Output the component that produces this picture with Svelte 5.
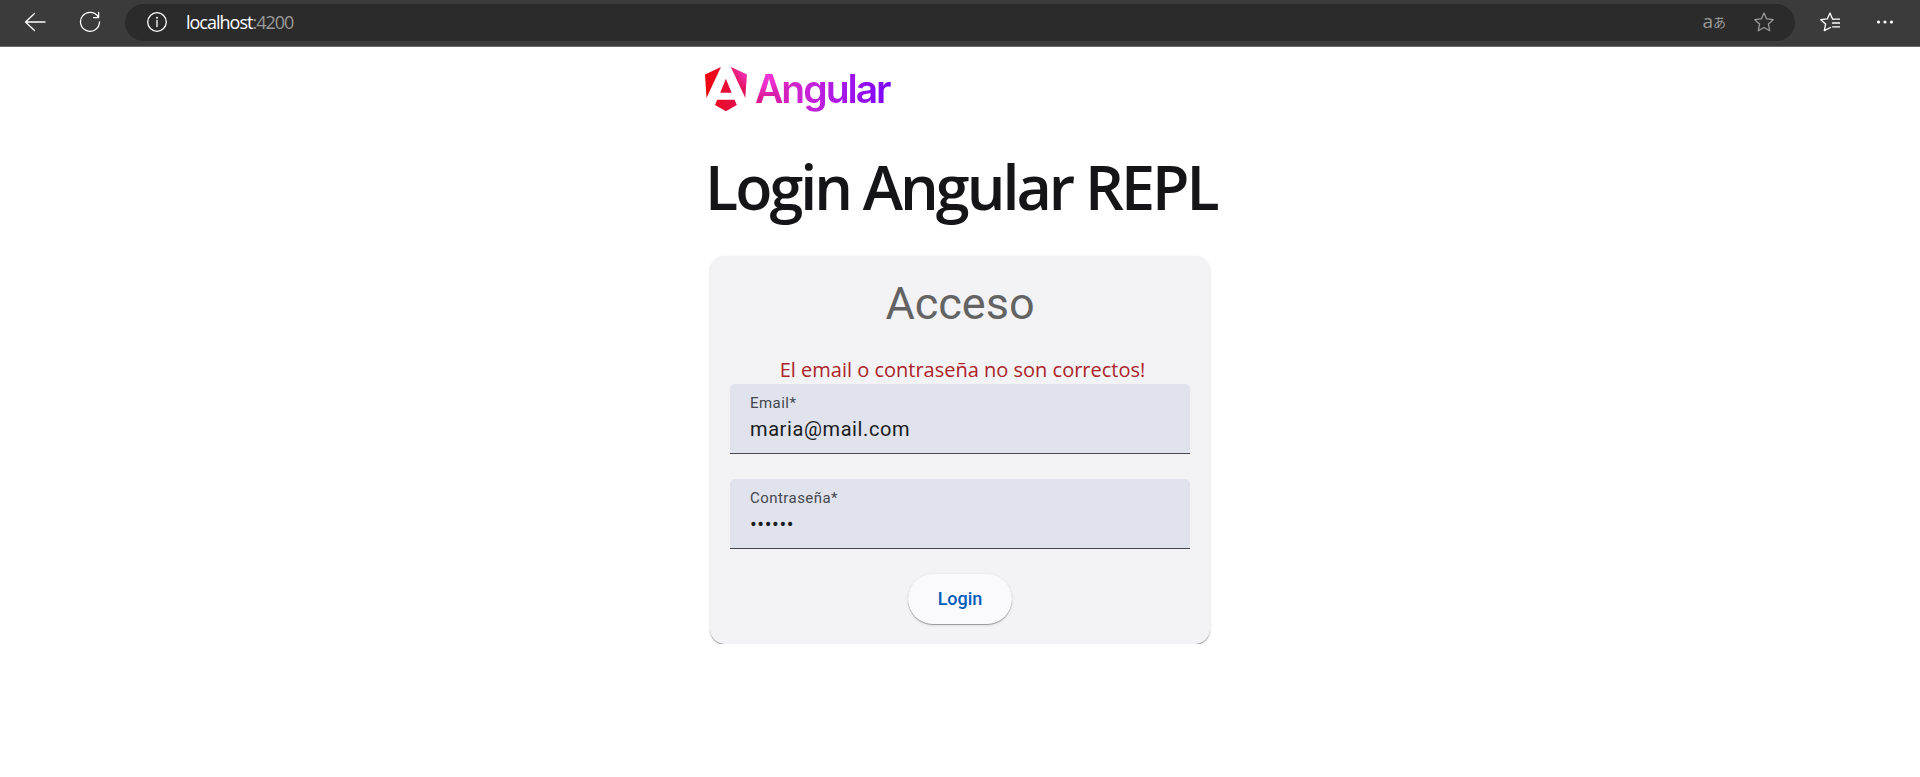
<script>
  let email = $state('maria@mail.com');
  let password = $state('secret');
  let error = $state('El email o contraseña no son correctos!');

  function submit(event) {
    event.preventDefault();
  }
</script>

<div class="window">
  <header class="toolbar">
    <button class="tool" aria-label="Back">
      <svg width="22" height="20" viewBox="0 0 22 20"><path d="M21 10H1.5M10.5 1.5 1.5 10l9 8.500" /></svg>
    </button>
    <button class="tool" aria-label="Refresh">
      <svg width="22" height="22" viewBox="0 0 22 22"><path d="M19.300 6.200A9.500 9.500 0 1 0 20.500 11M19.600 1.500V6.600H14.500" /></svg>
    </button>
    <div class="address">
      <button class="inner" aria-label="Site information">
        <svg width="20" height="20" viewBox="0 0 20 20"><circle cx="10" cy="10" r="9.300" /><path d="M10 8.500V14.500" /><circle class="solid" cx="10" cy="5.800" r="1" /></svg>
      </button>
      <span class="url">localhost<span class="port">:4200</span></span>
      <button class="inner translate" aria-label="Translate"><span class="latin">a</span><span class="kana">あ</span></button>
      <button class="inner dim" aria-label="Add to favorites">
        <svg width="20" height="20" viewBox="0 0 20 20"><path d="M10 1 12.700 6.900 19.200 7.700 14.400 12.100 15.700 18.700 10 15.500 4.300 18.700 5.600 12.100.8 7.700 7.300 6.900Z" /></svg>
      </button>
    </div>
    <button class="tool" aria-label="Favorites">
      <svg width="20" height="20" viewBox="0 0 20 20"><path d="M13.500 7.300 12.500 7 10 1 7.300 6.900.8 7.700 5.600 12.100 4.300 18.700 10.500 15.500M12.500 7.200H19.800M12.500 11H19.800M12.500 14.800H19.800" /></svg>
    </button>
    <button class="tool" aria-label="Settings and more">
      <svg width="18" height="6" viewBox="0 0 18 6"><circle class="solid" cx="2.500" cy="3" r="1.600" /><circle class="solid" cx="9" cy="3" r="1.600" /><circle class="solid" cx="15.500" cy="3" r="1.600" /></svg>
    </button>
  </header>

  <main>
    <div class="logo">
      <svg width="42" height="45" viewBox="0 0 223 239" aria-hidden="true">
        <defs>
          <linearGradient id="base" gradientUnits="userSpaceOnUse" x1="0" y1="192" x2="982" y2="192">
            <stop offset="0" stop-color="#f0060b" />
            <stop offset=".526" stop-color="#cc26d5" />
            <stop offset="1" stop-color="#7702ff" />
          </linearGradient>
          <radialGradient id="glow" gradientUnits="userSpaceOnUse" cx="305" cy="-61" r="206">
            <stop offset="0" stop-color="#ff41f8" />
            <stop offset=".707" stop-color="#ff41f8" stop-opacity=".5" />
            <stop offset="1" stop-color="#ff41f8" stop-opacity="0" />
          </radialGradient>
          <path id="shield" d="M222.077 39.192l-8.019 125.923L137.387 0l84.690 39.192zm-53.105 162.825l-57.933 33.056-57.934-33.056 11.783-28.556h92.301l11.783 28.556zM111.039 62.675l30.357 73.803H80.681l30.358-73.803zM7.937 165.115L0 39.192 84.690 0 7.937 165.115z" />
        </defs>
        <use href="#shield" fill="url(#base)" />
        <use href="#shield" fill="url(#glow)" />
      </svg>
      <span class="wordmark">Angular</span>
    </div>

    <h1>Login Angular REPL</h1>

    <form class="card" onsubmit={submit}>
      <h2>Acceso</h2>
      <p class="error" role="alert">{error}</p>
      <div class="field">
        <label for="email">Email*</label>
        <input id="email" type="email" bind:value={email} />
      </div>
      <div class="field">
        <label for="password">Contraseña*</label>
        <input id="password" type="password" bind:value={password} />
      </div>
      <button class="login" type="submit">Login</button>
    </form>
  </main>
</div>

<style>
  :global(body) {
    margin: 0;
    background: #fff;
  }

  button {
    border: 0;
    padding: 0;
    background: none;
    font: inherit;
    color: inherit;
    cursor: pointer;
  }

  .toolbar {
    box-sizing: border-box;
    display: flex;
    align-items: flex-start;
    height: 47px;
    padding: 4px 8px 4px 7px;
    background: #3b3b3b;
    border-bottom: 1px solid #6b6b6b;
    color: #fff;
  }

  .toolbar svg {
    display: block;
    fill: none;
    stroke: currentColor;
    stroke-width: 1.3;
    stroke-linejoin: round;
    stroke-linecap: round;
  }

  .toolbar .solid {
    fill: currentColor;
    stroke: none;
  }

  .tool {
    display: flex;
    flex: none;
    align-items: center;
    justify-content: center;
    width: 55px;
    height: 36px;
  }

  .address {
    box-sizing: border-box;
    display: flex;
    flex: 1;
    align-items: center;
    height: 37px;
    margin: 0 7px 0 8px;
    padding: 0 21px 1px 22px;
    border-radius: 19px;
    background: #2b2b2b;
  }

  .url {
    flex: 1;
    margin-left: 19px;
    font: 18px/24px "Open Sans", sans-serif;
    letter-spacing: -1px;
  }

  .port,
  .dim,
  .translate {
    color: #9a9a9a;
  }

  .translate {
    display: flex;
    align-items: center;
    margin-right: 28px;
    line-height: 20px;
  }

  .latin {
    padding-bottom: 2px;
    font-family: "Open Sans", sans-serif;
    font-size: 19px;
  }

  .kana {
    font-family: "Noto Sans CJK JP", sans-serif;
    font-size: 13px;
  }

  main {
    box-sizing: border-box;
    max-width: 510px;
    margin: 0 auto;
    padding-top: 20px;
  }

  .logo {
    display: flex;
    align-items: center;
    gap: 8px;
    height: 45px;
  }

  .wordmark {
    padding: 0 4px 2px 0;
    font: 600 39px/48px Inter, sans-serif;
    letter-spacing: -2px;
    color: transparent;
    background:
      radial-gradient(circle 39px at 5px -6px, #ff41f8, #ff41f880 70%, #ff41f800),
      linear-gradient(90deg, #e0188a, #cc26d5 34%, #7702ff);
    background-clip: text;
  }

  h1 {
    margin: 35px 0 0;
    font: 600 61px/80px "Open Sans", sans-serif;
    letter-spacing: -3px;
    white-space: nowrap;
    color: #151417;
  }

  .card {
    display: flex;
    flex-direction: column;
    margin: 29px 5px 0;
    padding: 20px;
    border-radius: 15px;
    background: #f3f3f6;
    box-shadow:
      0 1px 0 rgba(0, 0, 0, 0.28),
      0 1px 3px rgba(0, 0, 0, 0.16);
  }

  h2 {
    margin: 0;
    font: 400 45px/56px Roboto, sans-serif;
    text-align: center;
    color: #636363;
  }

  .error {
    margin: 26px 0 2px 5px;
    font: 20px/24px "Open Sans", sans-serif;
    text-align: center;
    color: #ac2328;
  }

  .field {
    box-sizing: border-box;
    display: flex;
    flex-direction: column;
    height: 70px;
    margin-bottom: 25px;
    padding: 9px 20px;
    border-bottom: 1px solid #44474e;
    border-radius: 5px 5px 0 0;
    background: #e0e2ec;
    font-family: Roboto, sans-serif;
  }

  label {
    font-size: 15px;
    line-height: 20px;
    letter-spacing: 0.03em;
    color: #44474e;
  }

  input {
    padding: 0;
    border: 0;
    outline: 0;
    background: none;
    font: 20px/32px Roboto, sans-serif;
    letter-spacing: 0.03em;
    color: #1a1b1f;
  }

  .login {
    align-self: center;
    width: 104px;
    height: 50px;
    border-radius: 25px;
    background: #faf9fd;
    box-shadow:
      0 1px 0 rgba(0, 0, 0, 0.28),
      0 1px 3px rgba(0, 0, 0, 0.16);
    font: 500 18px/24px Roboto, sans-serif;
    color: #005cbb;
  }
</style>
